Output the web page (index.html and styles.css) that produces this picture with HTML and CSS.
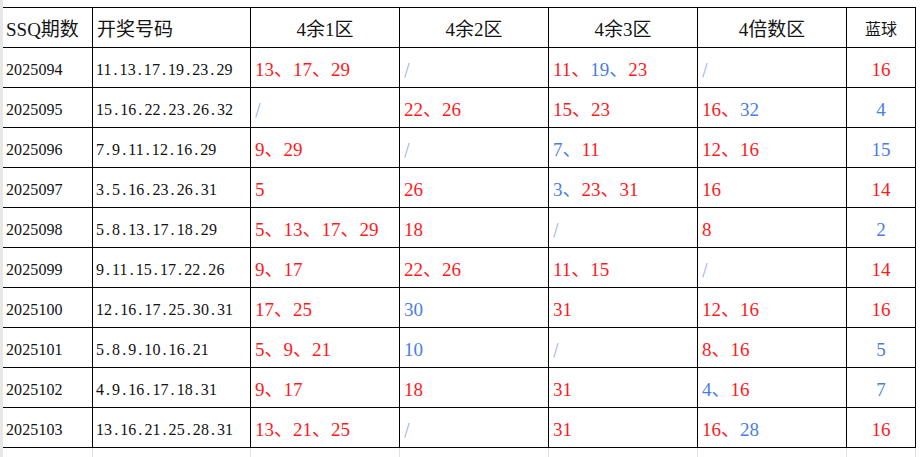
FILE: index.html
```html
<!DOCTYPE html>
<html lang="zh-CN">
<head>
<meta charset="utf-8">
<title>SSQ</title>
<link rel="stylesheet" href="styles.css">
</head>
<body>
<div class="sheet">
  <div class="grid">
    <div class="c h left">SSQ期数</div>
    <div class="c h left h2">开奖号码</div>
    <div class="c h center">4余1区</div>
    <div class="c h center">4余2区</div>
    <div class="c h center">4余3区</div>
    <div class="c h center">4倍数区</div>
    <div class="c h center hb">蓝球</div>

    <div class="c id">2025094</div>
    <div class="c nums">11<i>.</i>13<i>.</i>17<i>.</i>19<i>.</i>23<i>.</i>29</div>
    <div class="c z"><span class="r">13、</span><span class="r">17、</span><span class="r">29</span></div>
    <div class="c z"><span class="s">/</span></div>
    <div class="c z"><span class="r">11、</span><span class="b">19、</span><span class="r">23</span></div>
    <div class="c z"><span class="s">/</span></div>
    <div class="c z bl"><span class="r">16</span></div>

    <div class="c id">2025095</div>
    <div class="c nums">15<i>.</i>16<i>.</i>22<i>.</i>23<i>.</i>26<i>.</i>32</div>
    <div class="c z"><span class="s">/</span></div>
    <div class="c z"><span class="r">22、</span><span class="r">26</span></div>
    <div class="c z"><span class="r">15、</span><span class="r">23</span></div>
    <div class="c z"><span class="r">16、</span><span class="b">32</span></div>
    <div class="c z bl"><span class="b">4</span></div>

    <div class="c id">2025096</div>
    <div class="c nums">7<i>.</i>9<i>.</i>11<i>.</i>12<i>.</i>16<i>.</i>29</div>
    <div class="c z"><span class="r">9、</span><span class="r">29</span></div>
    <div class="c z"><span class="s">/</span></div>
    <div class="c z"><span class="b">7、</span><span class="r">11</span></div>
    <div class="c z"><span class="r">12、</span><span class="r">16</span></div>
    <div class="c z bl"><span class="b">15</span></div>

    <div class="c id">2025097</div>
    <div class="c nums">3<i>.</i>5<i>.</i>16<i>.</i>23<i>.</i>26<i>.</i>31</div>
    <div class="c z"><span class="r">5</span></div>
    <div class="c z"><span class="r">26</span></div>
    <div class="c z"><span class="b">3、</span><span class="r">23、</span><span class="r">31</span></div>
    <div class="c z"><span class="r">16</span></div>
    <div class="c z bl"><span class="r">14</span></div>

    <div class="c id">2025098</div>
    <div class="c nums">5<i>.</i>8<i>.</i>13<i>.</i>17<i>.</i>18<i>.</i>29</div>
    <div class="c z"><span class="r">5、</span><span class="r">13、</span><span class="r">17、</span><span class="r">29</span></div>
    <div class="c z"><span class="r">18</span></div>
    <div class="c z"><span class="s">/</span></div>
    <div class="c z"><span class="r">8</span></div>
    <div class="c z bl"><span class="b">2</span></div>

    <div class="c id">2025099</div>
    <div class="c nums">9<i>.</i>11<i>.</i>15<i>.</i>17<i>.</i>22<i>.</i>26</div>
    <div class="c z"><span class="r">9、</span><span class="r">17</span></div>
    <div class="c z"><span class="r">22、</span><span class="r">26</span></div>
    <div class="c z"><span class="r">11、</span><span class="r">15</span></div>
    <div class="c z"><span class="s">/</span></div>
    <div class="c z bl"><span class="r">14</span></div>

    <div class="c id">2025100</div>
    <div class="c nums">12<i>.</i>16<i>.</i>17<i>.</i>25<i>.</i>30<i>.</i>31</div>
    <div class="c z"><span class="r">17、</span><span class="r">25</span></div>
    <div class="c z"><span class="b">30</span></div>
    <div class="c z"><span class="r">31</span></div>
    <div class="c z"><span class="r">12、</span><span class="r">16</span></div>
    <div class="c z bl"><span class="r">16</span></div>

    <div class="c id">2025101</div>
    <div class="c nums">5<i>.</i>8<i>.</i>9<i>.</i>10<i>.</i>16<i>.</i>21</div>
    <div class="c z"><span class="r">5、</span><span class="r">9、</span><span class="r">21</span></div>
    <div class="c z"><span class="b">10</span></div>
    <div class="c z"><span class="s">/</span></div>
    <div class="c z"><span class="r">8、</span><span class="r">16</span></div>
    <div class="c z bl"><span class="b">5</span></div>

    <div class="c id">2025102</div>
    <div class="c nums">4<i>.</i>9<i>.</i>16<i>.</i>17<i>.</i>18<i>.</i>31</div>
    <div class="c z"><span class="r">9、</span><span class="r">17</span></div>
    <div class="c z"><span class="r">18</span></div>
    <div class="c z"><span class="r">31</span></div>
    <div class="c z"><span class="b">4、</span><span class="r">16</span></div>
    <div class="c z bl"><span class="b">7</span></div>

    <div class="c id">2025103</div>
    <div class="c nums">13<i>.</i>16<i>.</i>21<i>.</i>25<i>.</i>28<i>.</i>31</div>
    <div class="c z"><span class="r">13、</span><span class="r">21、</span><span class="r">25</span></div>
    <div class="c z"><span class="s">/</span></div>
    <div class="c z"><span class="r">31</span></div>
    <div class="c z"><span class="r">16、</span><span class="b">28</span></div>
    <div class="c z bl"><span class="r">16</span></div>
  </div>
  <div class="tail">
    <div class="g"></div><div class="g"></div><div class="g"></div><div class="g"></div><div class="g"></div><div class="g"></div><div class="g"></div>
  </div>
</div>
</body>
</html>
```

FILE: styles.css
```css
html, body {
  margin: 0;
  padding: 0;
  background: #ffffff;
}
body {
  width: 922px;
  height: 457px;
  overflow: hidden;
  font-family: "Liberation Serif", "Noto Sans CJK SC", serif;
}
.sheet {
  padding-top: 7px;
  border-left: 3px solid #e7e7e7;
  height: 450px;
}
.grid {
  display: grid;
  grid-template-columns: 90px 158px 149px 149px 149px 149px 69px;
  grid-auto-rows: 40px;
  border-top: 1px solid #000;
  width: 913px;
}
.c {
  box-sizing: border-box;
  border-right: 1px solid #000;
  border-bottom: 1px solid #000;
  white-space: nowrap;
  overflow: hidden;
}
.h {
  display: flex;
  align-items: center;
  font-size: 19px;
  color: #141414;
}
.h.left { padding-left: 3px; }
.h.h2 { padding-left: 4px; }
.h.center { justify-content: center; }
.h.hb { font-size: 16px; }
.id,
.nums {
  font-size: 16px;
  line-height: 39px;
  padding-top: 2px;
  color: #111;
  padding-left: 3px;
  letter-spacing: 0.1px;
}
.nums i {
  font-style: normal;
  display: inline-block;
  width: 8px;
  text-align: center;
}
.z {
  font-size: 19px;
  line-height: 39px;
  padding-top: 2px;
  padding-left: 4px;
}
.bl {
  text-align: center;
  padding-left: 0;
}
.r { color: #ff1a1a; }
.b { color: #4a7de4; }
.s {
  color: #8aa6ea;
  font-size: 17px;
  font-family: "DejaVu Sans", sans-serif;
  font-weight: 200;
}
.tail {
  display: grid;
  grid-template-columns: 90px 158px 149px 149px 149px 149px 69px;
  width: 913px;
  height: 10px;
}
.g {
  box-sizing: border-box;
  border-right: 1px solid #e2e2e2;
}
```
